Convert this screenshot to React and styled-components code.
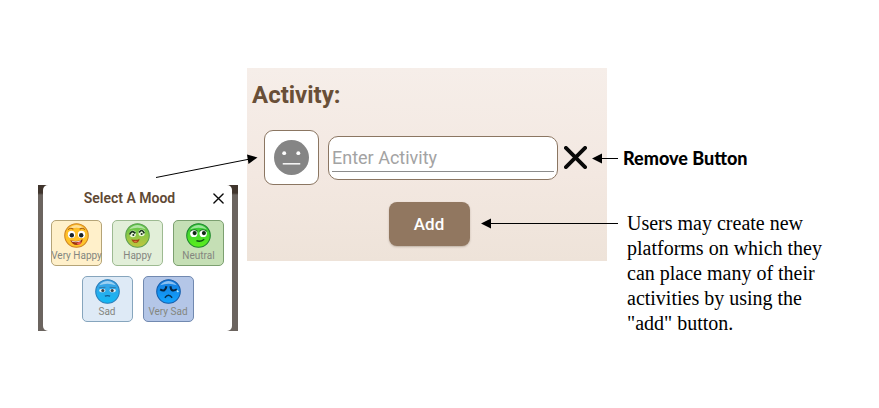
import React from "react";
import styled, { createGlobalStyle } from "styled-components";

const GlobalStyle = createGlobalStyle`
  *, *::before, *::after { box-sizing: border-box; }
  body { margin: 0; background: #fff; font-family: Roboto, sans-serif; }
  button, input { font: inherit; margin: 0; }
  h1, h2, h3, p { margin: 0; }
`;

const Page = styled.main`
  display: flex;
  align-items: flex-start;
  gap: 9px;
  padding: 68px 38px;
`;

const Backdrop = styled.aside`
  flex: 0 0 200px;
  margin-top: 117px;
  padding: 0 6px 0 5px;
  background: linear-gradient(#40352d 8px, #6b645f 10px);
`;

const Dialog = styled.section`
  padding: 3px 7px 9px;
  border-radius: 5px;
  background: #fff;
`;

const DialogHeader = styled.header`
  display: grid;
  grid-template-columns: 1fr 13px;
  gap: 3px;
  align-items: center;
  height: 20px;
  margin-bottom: 12px;
`;

const DialogTitle = styled.h2`
  color: #5f4934;
  font-size: 14px;
  line-height: 20px;
  font-weight: 600;
  text-align: center;
  white-space: nowrap;
`;

const IconButton = styled.button`
  display: flex;
  flex: none;
  align-items: center;
  justify-content: center;
  padding: 0;
  border: 0;
  background: none;
  color: #090909;
  cursor: pointer;
`;

const MoodList = styled.div`
  display: flex;
  flex-wrap: wrap;
  justify-content: center;
  gap: 10px;
`;

const MoodButton = styled.button`
  display: flex;
  flex: 0 0 51px;
  min-width: 0;
  flex-direction: column;
  align-items: center;
  height: 46px;
  padding: 2px 0 0;
  border: 1px solid ${(p) => p.$edge};
  border-radius: 5px;
  background: ${(p) => p.$fill};
  color: #84867f;
  font-size: 10px;
  line-height: 16px;
  white-space: nowrap;
  cursor: pointer;
`;

const Panel = styled.section`
  position: relative;
  flex: 0 0 360px;
  padding: 13px 1px 15px 5px;
  background: linear-gradient(#f6eee9, #f3e8e1 55%, #eee3d9);
`;

const PanelTitle = styled.h1`
  color: #694f37;
  font-size: 24px;
  line-height: 28px;
  font-weight: 700;
`;

const ActivityRow = styled.div`
  display: flex;
  align-items: center;
  gap: 6px;
  margin: 21px 19px 17px 12px;
`;

const MoodPicker = styled.button`
  display: flex;
  flex: none;
  align-items: center;
  justify-content: center;
  width: 55px;
  height: 55px;
  margin-right: 3px;
  padding: 0;
  border: 1px solid #8b7662;
  border-radius: 9px;
  background: #fff;
  cursor: pointer;
`;

const Field = styled.label`
  flex: 1;
  min-width: 0;
  height: 44px;
  padding: 6px 3px 7px;
  border: 1px solid #8b7662;
  border-radius: 10px;
  background: #fff;
`;

const FieldInput = styled.input`
  display: block;
  width: 100%;
  height: 29px;
  padding: 2px 0 0;
  border: 0;
  border-bottom: 1px solid #8c8c8c;
  outline: 0;
  background: none;
  color: #333;
  font-size: 18px;
  &::placeholder { color: #a3a3a3; opacity: 1; }
`;

const AddButton = styled.button`
  display: block;
  width: 81px;
  height: 44px;
  margin: 0 auto;
  padding: 0;
  border: 0;
  border-radius: 8px;
  background: #917760;
  box-shadow: 0 1px 2px rgba(80, 60, 40, 0.3);
  color: #fff;
  font-size: 17px;
  font-weight: 500;
  cursor: pointer;
`;

const Pointers = styled.svg`
  position: absolute;
  top: 0;
  left: -97px;
  overflow: visible;
  pointer-events: none;
`;

const Notes = styled.div`
  flex: 1;
  min-width: 0;
  padding: 78px 0 0 7px;
  color: #000;
`;

const NoteTitle = styled.h3`
  font-family: Lato, sans-serif;
  font-size: 18px;
  line-height: 24px;
  font-weight: 900;
`;

const NoteText = styled.p`
  max-width: 210px;
  padding: 41px 0 0 4px;
  font-family: "Liberation Serif", serif;
  font-size: 20px;
  line-height: 25px;
`;

function Cross({ size, weight }) {
  return (
    <svg width={size} height={size} viewBox="0 0 24 24" fill="none" stroke="currentColor" strokeWidth={weight} strokeLinecap="round" aria-hidden="true">
      <path d="M2 2 22 22M22 2 2 22" />
    </svg>
  );
}

const faces = {
  veryHappy: (
    <>
      <path d="M4 6.500Q6 4 9 6M15 6q3-2 5 .5" stroke="#a85c08" fill="none" />
      <circle cx="7.200" cy="11" r="3.500" fill="#fff" />
      <circle cx="16.800" cy="11" r="3.500" fill="#fff" />
      <circle cx="7.500" cy="11.800" r="2.100" fill="#17222b" />
      <circle cx="16.500" cy="11.800" r="2.100" fill="#17222b" />
      <path d="M6 16.500q6 2 12-1-1 5.500-6 5.500-4 0-6-4.500Z" fill="#9d3510" />
      <path d="M7 17q5 1.500 9-.5v1q-4 1.500-8 .5Z" fill="#fff" />
      <path d="M12 20q2-3 5-1-2 3-5 1Z" fill="#f25b58" />
    </>
  ),
  happy: (
    <>
      <ellipse cx="7.500" cy="10.500" rx="3" ry="3.200" fill="#edf6db" />
      <ellipse cx="16" cy="9.500" rx="3" ry="3.200" fill="#edf6db" />
      <path d="M4.500 11q2-5 5.500-1M13.500 9q3-4 5 1" stroke="#18351c" strokeWidth="1.600" fill="none" />
      <circle cx="8" cy="11.500" r="1" fill="#18351c" />
      <circle cx="16" cy="10.500" r="1" fill="#18351c" />
      <path d="M6 15.500q5 1.500 8-.5-.5 4-4 4-2.500 0-4-3.500Z" fill="#a34615" />
      <path d="M8 17.800q2.500-1.500 4 0-2 1.200-4 0Z" fill="#e36f42" />
    </>
  ),
  neutral: (
    <>
      <circle cx="7.500" cy="10" r="3.500" fill="#fff" />
      <circle cx="16.500" cy="10" r="3.500" fill="#fff" />
      <circle cx="8.300" cy="9.700" r="2" fill="#102a14" />
      <circle cx="17.200" cy="9.700" r="2" fill="#102a14" />
      <path d="M4 8q4-3 7 0M13 8q3-3 7 0" stroke="#136b19" fill="none" />
      <path d="M10 17q4 1.500 7.500-1.500" stroke="#0a5312" strokeWidth="1.300" fill="none" />
    </>
  ),
  sad: (
    <>
      <path d="M4 8.500 10 8M14 8l6 .5" stroke="#317bab" strokeWidth="1" />
      <ellipse cx="7" cy="11" rx="3" ry="1.700" fill="#e6eff4" />
      <ellipse cx="17" cy="11" rx="3" ry="1.700" fill="#e6eff4" />
      <circle cx="7.500" cy="11" r="1.500" fill="#35404a" />
      <circle cx="16.500" cy="11" r="1.500" fill="#35404a" />
      <path d="M9.500 16.500q2.500-1 5 0" stroke="#125b91" strokeWidth="1.200" fill="none" />
    </>
  ),
  verySad: (
    <>
      <path d="M4 10q5 3 6-3M14 7q0 6 6 3" stroke="#06243f" strokeWidth="2" fill="none" />
      <path d="m20 11 1.500 1.500" stroke="#bfefff" strokeWidth="1.300" />
      <path d="M8.500 18q3.500-5 7 0" stroke="#06304f" strokeWidth="1.400" fill="none" />
    </>
  ),
};

const moods = [
  { id: "veryHappy", label: "Very Happy", fill: "#fff0ca", edge: "#b5a477", top: "#ffbd28", bottom: "#ffc52c", rim: "#cf8420" },
  { id: "happy", label: "Happy", fill: "#e2efd9", edge: "#9dba91", top: "#58c94c", bottom: "#c3c53e", rim: "#5a9e4e" },
  { id: "neutral", label: "Neutral", fill: "#c5dfb5", edge: "#7ca070", top: "#35c43a", bottom: "#5bf01c", rim: "#1a842b" },
  { id: "sad", label: "Sad", fill: "#deeaf6", edge: "#86a5bd", top: "#3f9fe2", bottom: "#12b9f5", rim: "#287cb8" },
  { id: "verySad", label: "Very Sad", fill: "#b4c6e7", edge: "#7189b0", top: "#1479dc", bottom: "#12a5ff", rim: "#125baa" },
];

function MoodFace({ mood }) {
  const gradientId = `face-${mood.id}`;
  return (
    <svg width="25" height="25" viewBox="0 0 24 24" aria-hidden="true">
      <defs>
        <linearGradient id={gradientId} x2="0" y2="1">
          <stop stopColor={mood.top} />
          <stop offset="1" stopColor={mood.bottom} />
        </linearGradient>
      </defs>
      <circle cx="12" cy="12" r="11.3" fill={`url(#${gradientId})`} stroke={mood.rim} />
      <path d="M4 6q8-8 16 0-8-3-16 0Z" fill="#fff" opacity=".5" />
      {faces[mood.id]}
    </svg>
  );
}

function NeutralIcon() {
  return (
    <svg width="35" height="35" viewBox="0 0 36 36" aria-hidden="true">
      <circle cx="18" cy="18" r="18" fill="#858585" />
      <circle cx="10.500" cy="13.500" r="2" fill="#fff" />
      <circle cx="25" cy="13.500" r="2" fill="#fff" />
      <path d="M9 24.500h18" stroke="#fff" strokeWidth="1.500" />
    </svg>
  );
}

function PointerArrows() {
  return (
    <Pointers width="470" height="193" viewBox="0 0 470 193" aria-hidden="true">
      <g stroke="#000" strokeWidth="1" fill="none">
        <path d="M6 109.500 100 91" />
        <path d="M450 90.500h18" />
        <path d="M340 155.500h128" />
      </g>
      <path d="M97 86.500 107.500 89.500 98.500 96ZM442 90.500l10-5v10ZM331 155.500l10-5v10Z" />
    </Pointers>
  );
}

export default function App() {
  return (
    <>
      <GlobalStyle />
      <Page>
        <Backdrop>
          <Dialog aria-labelledby="mood-title">
            <DialogHeader>
              <DialogTitle id="mood-title">Select A Mood</DialogTitle>
              <IconButton type="button" aria-label="Close">
                <Cross size={11} weight={3} />
              </IconButton>
            </DialogHeader>
            <MoodList>
              {moods.map((mood) => (
                <MoodButton key={mood.id} type="button" $fill={mood.fill} $edge={mood.edge}>
                  <MoodFace mood={mood} />
                  <span>{mood.label}</span>
                </MoodButton>
              ))}
            </MoodList>
          </Dialog>
        </Backdrop>
        <Panel>
          <PanelTitle>Activity:</PanelTitle>
          <ActivityRow>
            <MoodPicker type="button" aria-label="Choose mood">
              <NeutralIcon />
            </MoodPicker>
            <Field>
              <FieldInput type="text" aria-label="Activity" placeholder="Enter Activity" />
            </Field>
            <IconButton type="button" aria-label="Remove activity">
              <Cross size={23} weight={4} />
            </IconButton>
          </ActivityRow>
          <AddButton type="button">Add</AddButton>
          <PointerArrows />
        </Panel>
        <Notes>
          <NoteTitle>Remove Button</NoteTitle>
          <NoteText>
            Users may create new platforms on which they can place many of their activities by using the "add" button.
          </NoteText>
        </Notes>
      </Page>
    </>
  );
}
